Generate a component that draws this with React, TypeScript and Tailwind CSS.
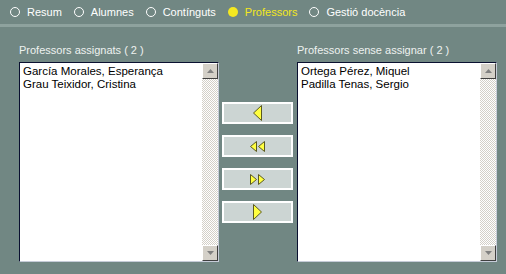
import React from "react";

const TABS = [
  { label: "Resum", active: false },
  { label: "Alumnes", active: false },
  { label: "Contínguts", active: false },
  { label: "Professors", active: true },
  { label: "Gestió docència", active: false },
];

const ASSIGNED = ["García Morales, Esperança", "Grau Teixidor, Cristina"];
const UNASSIGNED = ["Ortega Pérez, Miquel", "Padilla Tenas, Sergio"];

function ScrollArrow({ down }: { down?: boolean }) {
  return (
    <div className="w-[16px] h-[16px] bg-[#d4d0c8] border border-t-white border-l-white border-b-[#404040] border-r-[#404040] flex items-center justify-center">
      <svg width="7" height="4" viewBox="0 0 7 4">
        {down ? (
          <polygon points="0,0 7,0 3.5,4" fill="#808080" />
        ) : (
          <polygon points="3.5,0 7,4 0,4" fill="#808080" />
        )}
      </svg>
    </div>
  );
}

function ListBox({ items }: { items: string[] }) {
  return (
    <div className="w-[200px] h-[200px] flex border border-t-[#0a1030] border-l-[#0a1030] border-b-[#c6ccd8] border-r-[#c6ccd8] bg-white">
      <div className="flex-1 pl-[3px] pt-[2px] text-[11.5px] leading-[12px] text-black">
        {items.map((it) => (
          <div key={it} className="h-[12px] mb-[1px]">{it}</div>
        ))}
      </div>
      <div className="w-[16px] flex flex-col bg-[repeating-conic-gradient(#d4d0c8_0%_25%,#ffffff_0%_50%)] bg-[length:2px_2px]">
        <ScrollArrow />
        <div className="flex-1" />
        <ScrollArrow down />
      </div>
    </div>
  );
}

function Tri({ left, w, h }: { left?: boolean; w: number; h: number }) {
  const pts = left
    ? `${w - 0.5},0.5 ${w - 0.5},${h - 0.5} 0.5,${h / 2}`
    : `0.5,0.5 0.5,${h - 0.5} ${w - 0.5},${h / 2}`;
  return (
    <svg width={w} height={h} viewBox={`0 0 ${w} ${h}`}>
      <polygon points={pts} fill="#ffff40" stroke="#5a5a20" strokeWidth="1" />
    </svg>
  );
}

function MoveButton({ children }: { children: React.ReactNode }) {
  return (
    <div className="h-[22px] w-[71px] bg-[#ccd5d3] border-2 border-white flex items-center justify-center">
      {children}
    </div>
  );
}

export default function App() {
  return (
    <div
      className="w-[506px] h-[274px] bg-[#718783] overflow-hidden"
      style={{ fontFamily: '"Liberation Sans", Arial, sans-serif' }}
    >
      <div className="h-[24px] flex items-center pl-[10px] text-[11px]">
        {TABS.map((t) => (
          <div key={t.label} className="flex items-center mr-[12px]">
            <span
              className={`w-[10px] h-[10px] rounded-full mr-[7px] ${
                t.active ? "bg-[#f4e820]" : "border border-white"
              }`}
            />
            <span className={t.active ? "text-[#f4e820]" : "text-white"}>{t.label}</span>
          </div>
        ))}
      </div>
      <div className="h-[3px] bg-[#8ea29e]" />

      <div className="flex pl-[19px]">
        <div className="w-[200px]">
          <div className="mt-[16px] h-[14px] text-[11px] leading-[14px] text-[#eef2f0]">
            Professors assignats ( 2 )
          </div>
          <div className="mt-[5px]">
            <ListBox items={ASSIGNED} />
          </div>
        </div>

        <div className="ml-[3px] mr-[4px] pt-[75px] flex flex-col gap-[11px]">
          <MoveButton>
            <Tri left w={9} h={16} />
          </MoveButton>
          <MoveButton>
            <div className="flex gap-[1px]">
              <Tri left w={7} h={11} />
              <Tri left w={7} h={11} />
            </div>
          </MoveButton>
          <MoveButton>
            <div className="flex gap-[1px]">
              <Tri w={7} h={11} />
              <Tri w={7} h={11} />
            </div>
          </MoveButton>
          <MoveButton>
            <Tri w={9} h={16} />
          </MoveButton>
        </div>

        <div className="w-[200px]">
          <div className="mt-[16px] h-[14px] text-[11px] leading-[14px] text-[#eef2f0]">
            Professors sense assignar ( 2 )
          </div>
          <div className="mt-[5px]">
            <ListBox items={UNASSIGNED} />
          </div>
        </div>
      </div>
    </div>
  );
}
